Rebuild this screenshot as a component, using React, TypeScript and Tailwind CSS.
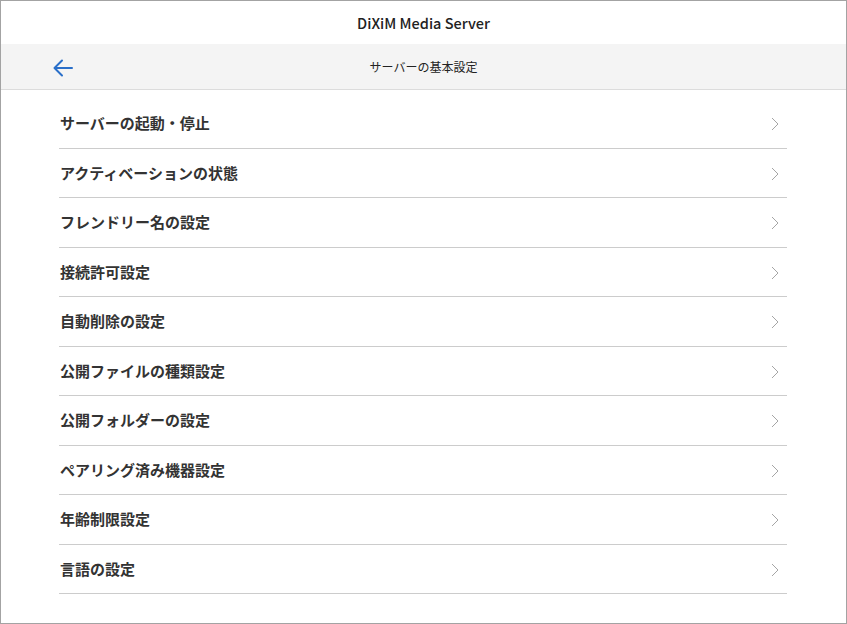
const items = [
  "サーバーの起動・停止",
  "アクティベーションの状態",
  "フレンドリー名の設定",
  "接続許可設定",
  "自動削除の設定",
  "公開ファイルの種類設定",
  "公開フォルダーの設定",
  "ペアリング済み機器設定",
  "年齢制限設定",
  "言語の設定",
];

export default function App() {
  return (
    <div
      className="w-[847px] h-[624px] border border-[#a3a3a3] bg-white flex flex-col overflow-hidden"
      style={{ fontFamily: '"Noto Sans CJK JP", "Noto Sans", sans-serif' }}
    >
      {/* タイトル */}
      <div className="h-[43px] flex items-center justify-center text-[14.5px] font-medium text-[#222]">
        DiXiM Media Server
      </div>

      {/* ヘッダー */}
      <div className="relative h-[46px] bg-[#f4f4f4] border-b border-[#dcdcdc] flex items-center justify-center">
        <button className="absolute left-[50px] top-[12px] w-6 h-6 flex items-center justify-center">
          <svg width="22" height="22" viewBox="0 0 22 22" fill="none" stroke="#2a6fc9" strokeWidth="2" strokeLinecap="round" strokeLinejoin="round">
            <path d="M20 11H3" />
            <path d="M10 3.5 2.5 11 10 18.5" />
          </svg>
        </button>
        <span className="text-[12px] text-[#222]">サーバーの基本設定</span>
      </div>

      {/* 一覧 */}
      <div className="px-[58px] pt-[9px] pr-[59px]">
        {items.map((label) => (
          <div
            key={label}
            className="h-[49.5px] flex items-center justify-between border-b border-[#cccccc] pl-[1px]"
          >
            <span className="text-[15px] font-bold text-[#333]">{label}</span>
            <svg width="8" height="14" viewBox="0 0 8 14" fill="none" stroke="#a5a5a5" strokeWidth="1" className="mr-[8px] mt-[2px]">
              <path d="M1 1 7 7 1 13" />
            </svg>
          </div>
        ))}
      </div>
    </div>
  );
}
